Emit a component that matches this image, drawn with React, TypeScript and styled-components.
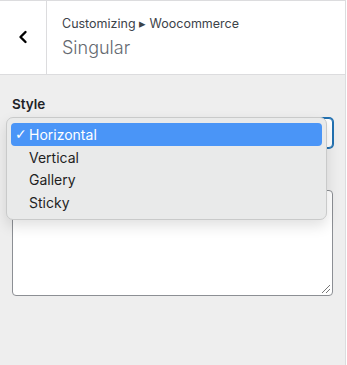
import React from 'react';
import styled, { createGlobalStyle } from 'styled-components';

const GlobalStyle = createGlobalStyle`
    html, body {
        margin: 0;
        padding: 0;
        background: #ffffff;
    }
    body {
        font-family: Inter, "Noto Sans", "Liberation Sans", sans-serif;
        -webkit-font-smoothing: antialiased;
    }
`;

const options = ['Horizontal', 'Vertical', 'Gallery', 'Sticky'];

const App: React.FC = () => {
    const selected = 'Horizontal';

    return (
        <>
            <GlobalStyle />
            <Panel>
                <Header>
                    <BackButton aria-label="Back">
                        <svg width="12" height="14" viewBox="0 0 12 14">
                            <path d="M8.5 2 L3.5 7 L8.5 12" fill="none" stroke="#000" strokeWidth="2.4" strokeLinecap="round" strokeLinejoin="round" />
                        </svg>
                    </BackButton>
                    <TitleBlock>
                        <Breadcrumb>Customizing ▸ Woocommerce</Breadcrumb>
                        <Title>Singular</Title>
                    </TitleBlock>
                </Header>
                <Body>
                    <Field>
                        <Label>Style</Label>
                        <SelectWrap>
                            <SelectBox />
                            <Menu>
                                {options.map((opt) => (
                                    <MenuItem key={opt} $active={opt === selected}>
                                        <Check>{opt === selected ? '✓' : ''}</Check>
                                        {opt}
                                    </MenuItem>
                                ))}
                            </Menu>
                        </SelectWrap>
                    </Field>
                    <TextArea />
                </Body>
            </Panel>
        </>
    );
};

const Panel = styled.div`
    width: 345px;
    height: 365px;
    background: #eeeeee;
    border-right: 1px solid #dcdcde;
    display: flex;
    flex-direction: column;
`;

const Header = styled.div`
    display: flex;
    height: 73px;
    background: #ffffff;
    border-top: 1px solid #dcdcde;
    border-bottom: 1px solid #dcdcde;
`;

const BackButton = styled.div`
    width: 47px;
    border-right: 1px solid #dcdcde;
    display: flex;
    align-items: center;
    justify-content: center;
    padding-bottom: 2px;
    box-sizing: border-box;
`;

const TitleBlock = styled.div`
    display: flex;
    flex-direction: column;
    padding: 14px 0 0 15px;
`;

const Breadcrumb = styled.div`
    font-size: 12.5px;
    line-height: 18px;
    color: #3c434a;
`;

const Title = styled.div`
    font-size: 18px;
    font-weight: 300;
    line-height: 28px;
    color: #646970;
    margin-top: 1px;
`;

const Body = styled.div`
    padding: 20px 12px 0 12px;
    display: flex;
    flex-direction: column;
`;

const Field = styled.div`
    display: flex;
    flex-direction: column;
`;

const Label = styled.div`
    font-size: 13.5px;
    font-weight: 600;
    color: #1d2327;
    line-height: 18px;
    margin-bottom: 5px;
`;

const SelectWrap = styled.div`
    position: relative;
`;

const SelectBox = styled.div`
    height: 30px;
    box-sizing: border-box;
    border: 1px solid #2271b1;
    box-shadow: 0 0 0 1px #2271b1;
    border-radius: 4px;
    background: #ffffff;
`;

const Menu = styled.div`
    position: absolute;
    left: -6px;
    top: -1px;
    width: 321px;
    height: 103px;
    box-sizing: border-box;
    padding: 5px 4px;
    background: #e9eaea;
    border: 1px solid #c9caca;
    border-radius: 7px;
    box-shadow: 0 6px 14px rgba(0, 0, 0, 0.12);
    display: flex;
    flex-direction: column;
    z-index: 2;
`;

const MenuItem = styled.div<{ $active?: boolean }>`
    height: 23px;
    display: flex;
    align-items: center;
    border-radius: 4px;
    font-size: 14px;
    color: ${(p) => (p.$active ? '#ffffff' : '#1f1f1f')};
    background: ${(p) => (p.$active ? '#4a95f7' : 'transparent')};
`;

const Check = styled.span`
    width: 14px;
    padding-left: 4px;
    font-size: 14px;
    font-family: "DejaVu Sans", sans-serif;
    box-sizing: content-box;
`;

const TextArea = styled.div`
    margin-top: 42px;
    height: 106px;
    box-sizing: border-box;
    border: 1px solid #8c8f94;
    border-radius: 4px;
    background: #ffffff;
    position: relative;

    &::after {
        content: '';
        position: absolute;
        right: 2px;
        bottom: 2px;
        width: 8px;
        height: 8px;
        background: linear-gradient(135deg, transparent 45%, #777 45%, #777 52%, transparent 52%, transparent 70%, #777 70%, #777 77%, transparent 77%);
    }
`;

export default App;
